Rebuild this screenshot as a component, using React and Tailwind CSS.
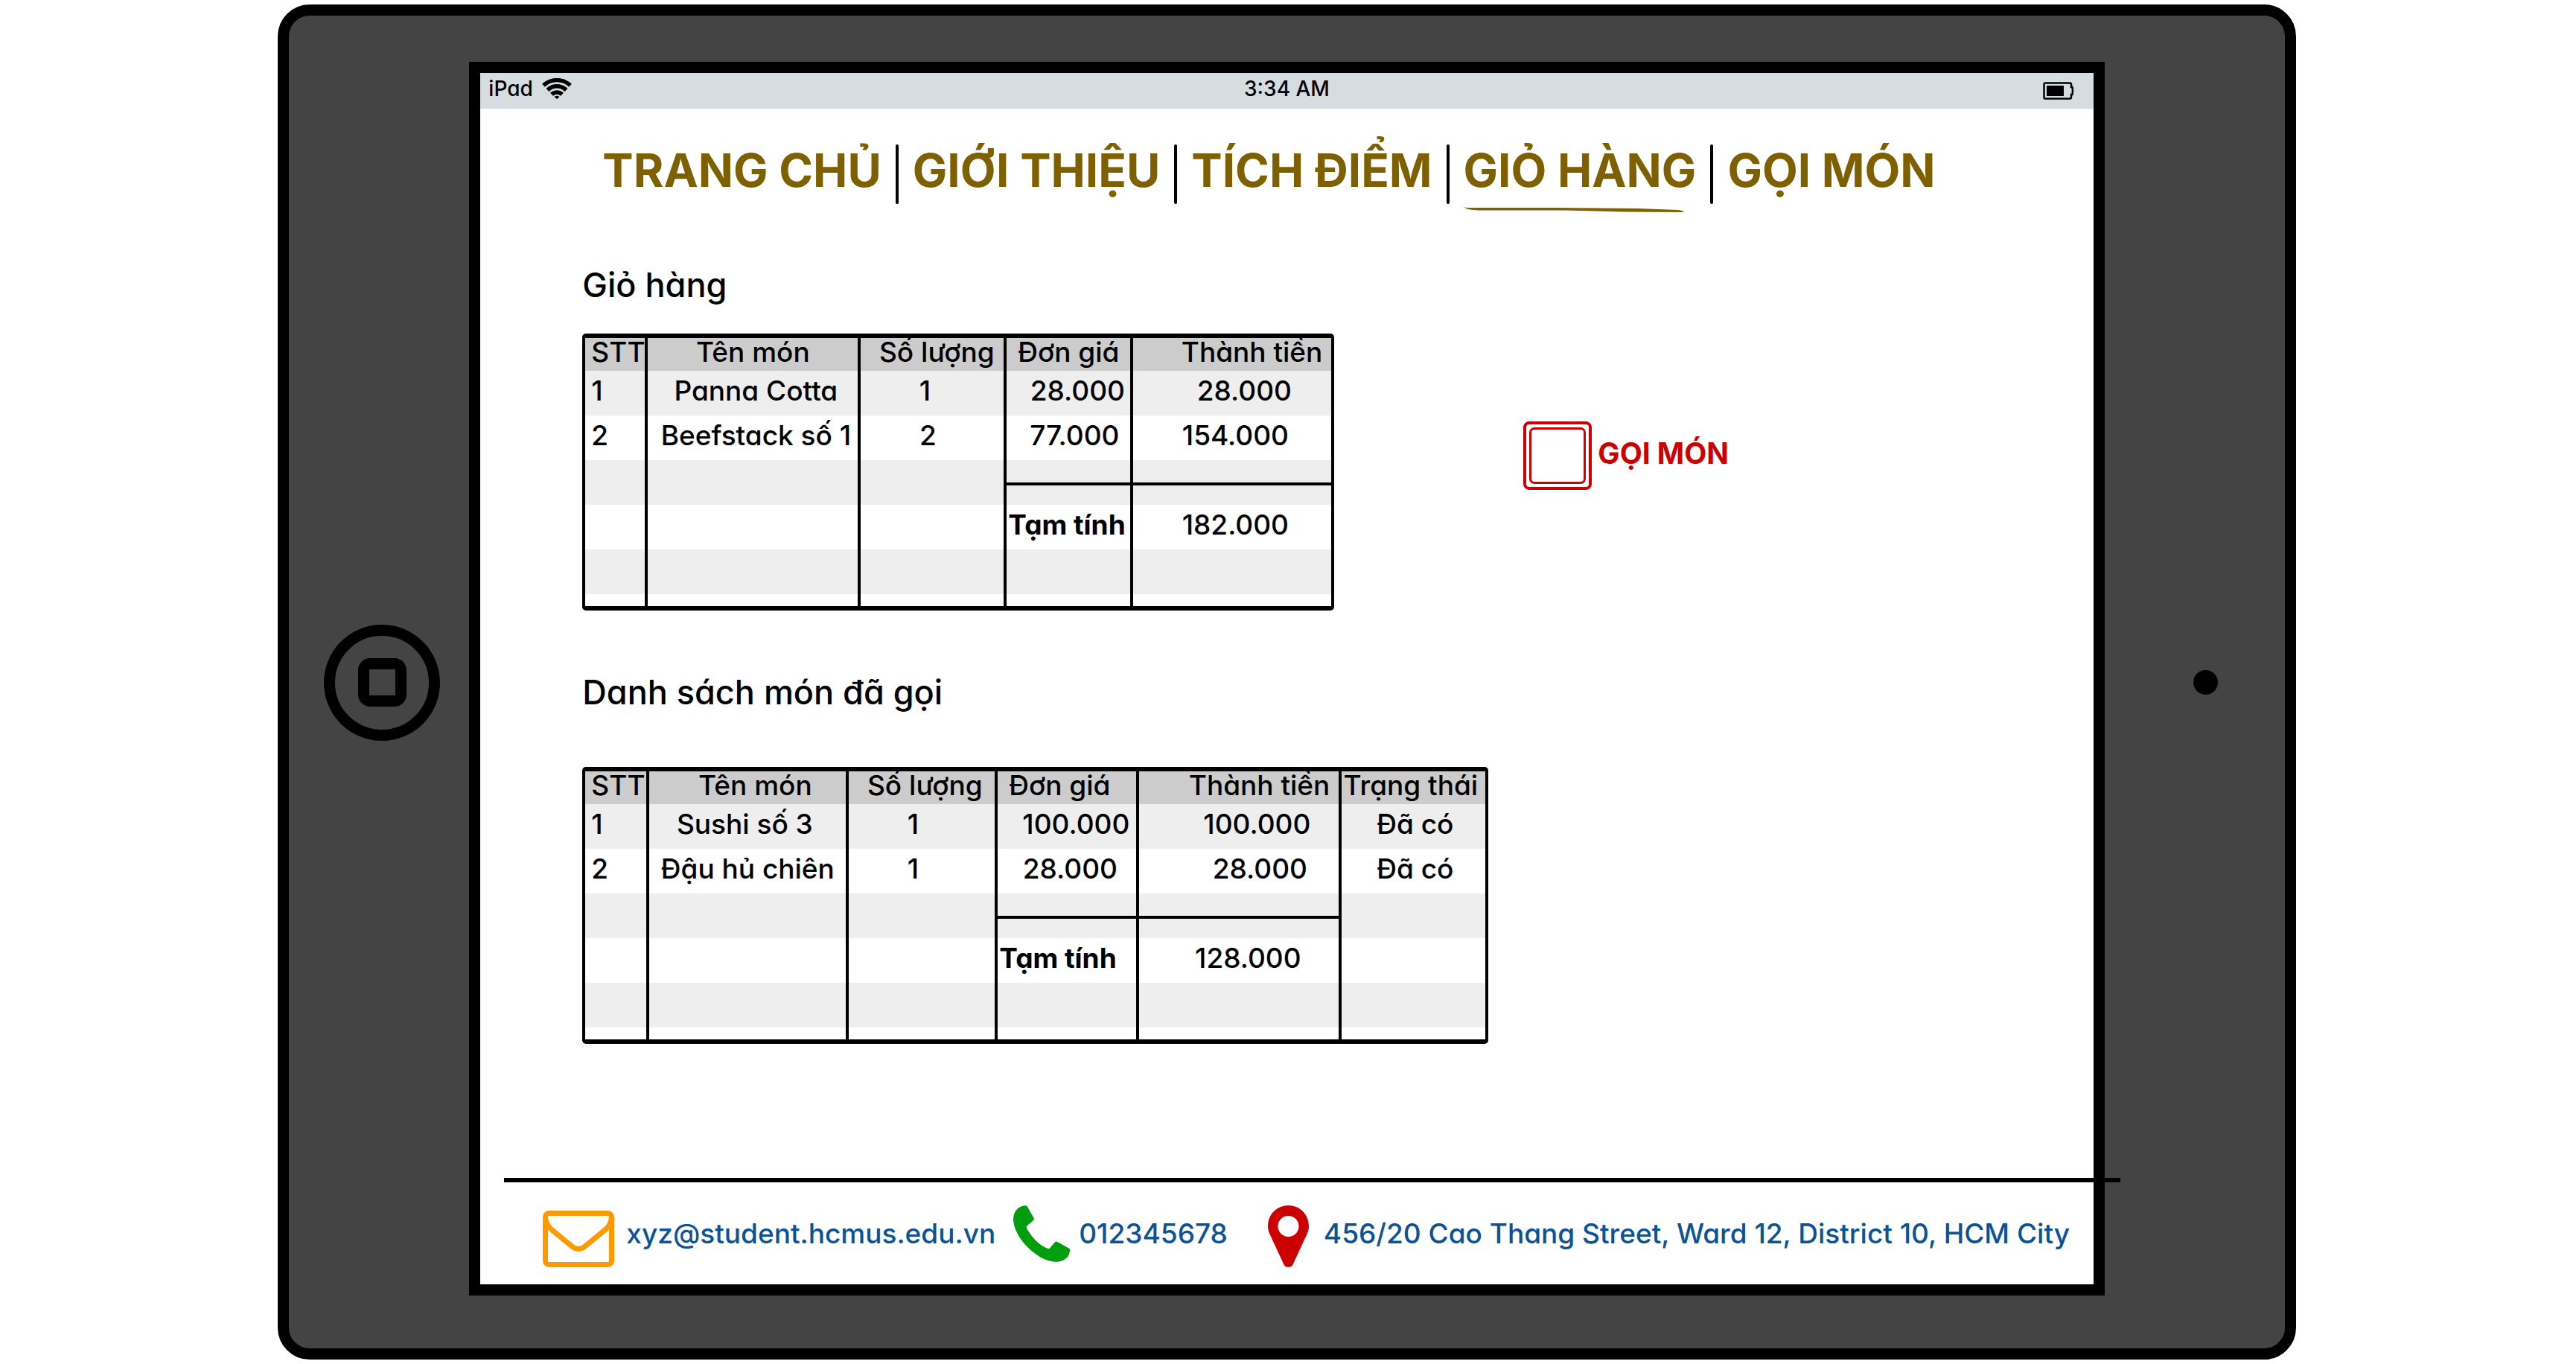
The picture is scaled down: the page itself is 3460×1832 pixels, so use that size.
const NAV = ['TRANG CHỦ', 'GIỚI THIỆU', 'TÍCH ĐIỂM', 'GIỎ HÀNG', 'GỌI MÓN'];

const CART = {
  width: 'w-[1010px]',
  cols: [84, 286, 196, 170, 266],
  head: [
    ['STT', 'pl-2 text-left'],
    ['Tên món', 'text-center'],
    ['Số lượng', 'pl-3 text-center'],
    ['Đơn giá', 'text-center'],
    ['Thành tiền', 'pr-3 text-right'],
  ],
  rows: [
    [['1', 'pl-2'], ['Panna Cotta', 'pl-2 text-center'], ['1', 'pr-5 text-center'], ['28.000', 'pl-6 text-center'], ['28.000', 'pl-8 text-center']],
    [['2', 'pl-2'], ['Beefstack số 1', 'pl-2 text-center'], ['2', 'pr-3 text-center'], ['77.000', 'pl-4 text-center'], ['154.000', 'pl-2 text-center']],
  ],
  total: ['182.000', 'pl-2 text-center'],
};

const ORDERED = {
  width: 'w-[1217px]',
  cols: [86, 268, 200, 190, 272, 193],
  head: [
    ['STT', 'pl-2 text-left'],
    ['Tên món', 'pl-5 text-center'],
    ['Số lượng', 'pl-2 text-center'],
    ['Đơn giá', 'pr-5 text-center'],
    ['Thành tiền', 'pr-3 text-right'],
    ['Trạng thái', 'pr-2 text-center'],
  ],
  rows: [
    [['1', 'pl-2'], ['Sushi số 3', 'pr-2 text-center'], ['1', 'pr-6 text-center'], ['100.000', 'pl-6 text-center'], ['100.000', 'pl-12 text-center'], ['Đã có', 'pl-1 text-center']],
    [['2', 'pl-2'], ['Đậu hủ chiên', 'text-center'], ['1', 'pr-6 text-center'], ['28.000', 'pl-2 text-center'], ['28.000', 'pl-14 text-center'], ['Đã có', 'pl-1 text-center']],
  ],
  total: ['128.000', 'pl-6 text-center'],
};

const rule = 'border-r-4 border-black last:border-r-0';

function OrderTable({ data, labelledBy }) {
  const { cols, head, rows, total, width } = data;
  const blank = (cls, underlined) =>
    cols.map((_, i) => (
      <td key={i} className={`${rule} ${cls} ${underlined && (i === 3 || i === 4) ? 'border-b-4' : ''}`} />
    ));
  return (
    <div className={`${width} shrink-0 rounded-[5px] border-x-4 border-y-[6px] border-black`}>
      <table aria-labelledby={labelledBy} className="w-full table-fixed border-separate border-spacing-0 text-[37px] leading-[54px] font-medium whitespace-nowrap">
        <colgroup>
          {cols.map((w, i) => (
            <col key={i} style={{ width: w }} />
          ))}
        </colgroup>
        <thead>
          <tr className="bg-[#cccccc]">
            {head.map(([text, cls], i) => (
              <th key={i} scope="col" className={`${rule} h-[44px] align-top leading-[38px] font-medium ${cls}`}>
                {text}
              </th>
            ))}
          </tr>
        </thead>
        <tbody>
          {rows.map((row, r) => (
            <tr key={r} className="odd:bg-[#eeeeee]">
              {row.map(([text, cls], i) => (
                <td key={i} className={`${rule} h-[60px] align-top ${cls}`}>
                  {text}
                </td>
              ))}
            </tr>
          ))}
          <tr className="bg-[#eeeeee]">{blank('h-[34px]', true)}</tr>
          <tr className="bg-[#eeeeee]">{blank('h-[26px]')}</tr>
          <tr>
            {cols.map((_, i) => (
              <td key={i} className={`${rule} h-[60px] align-top ${i === 3 ? 'pl-0.5 font-bold' : ''} ${i === 4 ? total[1] : ''}`}>
                {i === 3 ? 'Tạm tính' : i === 4 ? total[0] : ''}
              </td>
            ))}
          </tr>
          <tr className="bg-[#eeeeee]">{blank('h-[60px]')}</tr>
          <tr>{blank('h-4')}</tr>
        </tbody>
      </table>
    </div>
  );
}

function WifiIcon() {
  return (
    <svg viewBox="0 0 40 28" className="h-7 w-10" aria-label="Wi-Fi">
      <g fill="none" stroke="#000" strokeWidth="5.500">
        <path d="M2 9.800a26 26 0 0 1 36 0" />
        <path d="M7.500 15.900a18 18 0 0 1 25 0" />
        <path d="M13 21.800a10 10 0 0 1 14 0" />
      </g>
      <path d="M20 28l-3.500-3a5 4 0 0 1 7 0z" />
    </svg>
  );
}

function BatteryIcon() {
  return (
    <svg viewBox="0 -6 42 30" className="h-[30px] w-[42px]" aria-label="Pin">
      <path d="M3 1.500h33a2 2 0 0 1 2 2V7h1.500q1 5 0 10H38v3.500a2 2 0 0 1-2 2H3a1.500 1.500 0 0 1-1.500-1.500V3A1.500 1.500 0 0 1 3 1.500z" fill="none" stroke="#000" strokeWidth="2.500" />
      <rect x="5" y="5" width="23" height="14" />
    </svg>
  );
}

function MailIcon() {
  return (
    <svg viewBox="0 -14 96 90" className="h-[90px] w-24 shrink-0" fill="none" stroke="#ff9900" strokeWidth="7" aria-hidden="true">
      <rect x="3.500" y="3.500" width="89" height="69" rx="5" />
      <path d="M3.500 8c0 8 3 13 9 18L40 48.500q8 6 16 0L83.500 26c6-5 9-10 9-18" />
    </svg>
  );
}

function PhoneIcon() {
  return (
    <svg viewBox="0 0 76 76" className="size-[76px] shrink-0" fill="#009e0f" aria-hidden="true">
      <path d="M16.500 0.300q1.400-.3 2.200 1L27.600 17q.8 1.600-.5 2.900L18.300 27.500q-1 1-.4 2.400C23 41 34 53 46.500 58q1.400.5 2.400-.5L56 49.200q1.200-1.200 2.800-.4L75 57.800q1.200.7 1.100 2.200-.3 5-2.600 8.500C69 74 62.500 76.300 55 75.700 32 74 1 44 0 19 0 9.500 5.500.5 16.500.300z" />
    </svg>
  );
}

function PinIcon() {
  return (
    <svg viewBox="0 -7 55 90" className="h-[90px] w-[55px] shrink-0" fill="#cc0000" aria-hidden="true">
      <path fillRule="evenodd" d="M27.500 0C42 0 55 11 55 28c0 4-1 7-2.500 10.500L34 78.500q-2 4.500-6.500 4.500T21 78.500L2.500 38.500C1 35 0 32 0 28 0 11 13 0 27.500 0zm0 14a14 14 0 1 0 0 28 14 14 0 0 0 0-28z" />
    </svg>
  );
}

function Home() {
  return (
    <button type="button" aria-label="Home" className="flex size-[156px] items-center justify-center rounded-full border-[15px] border-black">
      <span className="size-[65px] rounded-[16px] border-[15px] border-black" />
    </button>
  );
}

export default function App() {
  return (
    <div className="bg-white pt-1.5 pr-[3px] pb-1.5 font-['Inter','Noto_Sans',sans-serif] text-black [font-feature-settings:'cv11']">
      <div className="mx-auto flex w-[78.4%] items-center rounded-[43px] border-[15px] border-black bg-[#444444] pt-[62px] pb-[71px]">
        <div className="flex w-[242px] shrink-0 justify-center pt-[10px] pl-2">
          <Home />
        </div>

        <div className="min-w-0 flex-1 border-[15px] border-black bg-white">
          <div className="grid h-12 grid-cols-3 items-center bg-[#d6dde0] px-[11px] pb-1.5 text-[28px] leading-[36px] font-medium">
            <div className="flex items-center gap-3">
              iPad
              <WifiIcon />
            </div>
            <div className="text-center">3:34 AM</div>
            <div className="flex justify-end pr-[15px]">
              <BatteryIcon />
            </div>
          </div>

          <nav className="flex gap-[19px] pt-12 pl-[164px] text-[62px] leading-[70px] font-bold whitespace-nowrap text-[#7f6000]">
            {NAV.map((label, i) => (
              <div key={label} className="flex gap-[19px]">
                {i > 0 && <span className="h-20 w-1 rounded-full bg-black" />}
                <a href="#" aria-current={label === 'GIỎ HÀNG' ? 'page' : undefined} className="relative">
                  {label}
                  {label === 'GIỎ HÀNG' && (
                    <svg viewBox="0 0 296 8" className="absolute top-[84px] left-0 h-2 w-[296px]" fill="#7f6000" aria-hidden="true">
                      <path d="M0 0l4 1 120 0 110 1 54 2q6 .5 8 3-80 0-160-2.500L20 4.500Q4 4 0 0z" />
                    </svg>
                  )}
                </a>
              </div>
            ))}
          </nav>

          <main className="pt-[79px] pl-[137px]">
            <h2 id="cart" className="text-[45px] leading-[60px] font-medium">Giỏ hàng</h2>
            <div className="mt-[35px] flex items-start">
              <OrderTable data={CART} labelledBy="cart" />
              <label className="mt-[118px] ml-[254px] flex items-start gap-2 text-[39px] leading-[86px] font-bold whitespace-nowrap text-[#cc0000]">
                <input
                  type="checkbox"
                  className="size-[92px] appearance-none rounded-[8px] border-4 border-[#cc0000] before:m-1 before:block before:size-[76px] before:rounded-[7px] before:border-[3px] before:border-[#cc0000] before:content-['']"
                />
                GỌI MÓN
              </label>
            </div>
            <h2 id="ordered" className="mt-20 text-[45px] leading-[60px] font-medium">Danh sách món đã gọi</h2>
            <div className="mt-[70px]">
              <OrderTable data={ORDERED} labelledBy="ordered" />
            </div>
          </main>

          <footer className="mt-[180px]">
            <div className="-mr-9 ml-8 h-1.5 bg-black" />
            <div className="flex h-[137px] items-center pl-[84px] text-[37px] leading-[48px] font-medium whitespace-nowrap text-[#0b5394]">
              <a href="mailto:xyz@student.hcmus.edu.vn" className="flex items-center gap-4">
                <MailIcon />
                xyz@student.hcmus.edu.vn
              </a>
              <a href="tel:012345678" className="ml-6 flex items-center gap-3">
                <PhoneIcon />
                012345678
              </a>
              <a href="#map" className="ml-[54px] flex items-center gap-5">
                <PinIcon />
                456/20 Cao Thang Street, Ward 12, District 10, HCM City
              </a>
            </div>
          </footer>
        </div>

        <div className="flex w-[242px] shrink-0 justify-center pt-[10px] pl-[30px]">
          <span className="size-[33px] rounded-full bg-black" />
        </div>
      </div>
    </div>
  );
}
